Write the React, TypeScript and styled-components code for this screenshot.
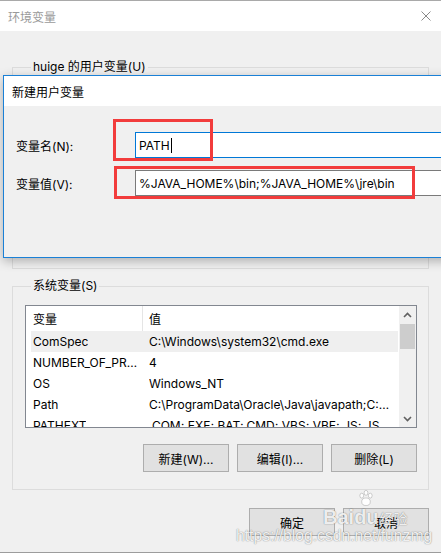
import React from "react";
import styled, { createGlobalStyle } from "styled-components";

const Global = createGlobalStyle`
  html, body { margin: 0; padding: 0; background: #ffffff; }
  body {
    font-family: "Inter", "Noto Sans CJK SC", sans-serif;
    font-size: 12px;
    color: #000;
  }
  * { box-sizing: border-box; }
`;

const Screen = styled.div`
  position: relative;
  width: 441px;
  height: 554px;
  overflow: hidden;
  display: flex;
  flex-direction: column;
  background: #ffffff;
  padding-bottom: 1px;
`;

const WindowEdge = styled.div`
  height: 1px;
  background: #a9a9a9;
  flex: none;
`;

const TitleBar = styled.div<{ $active?: boolean }>`
  height: 30px;
  flex: none;
  background: #ffffff;
  display: flex;
  align-items: center;
  justify-content: space-between;
  padding: 0 10px 0 8px;
  color: ${(p) => (p.$active ? "#000000" : "#9a9a9a")};
  font-family: "Noto Sans CJK SC", sans-serif;
  font-size: 12px;
`;

const WindowBody = styled.div`
  flex: 1;
  background: #f0f0f0;
  border-bottom: 1px solid #9c9c9c;
  padding: 28px 12px 0 12px;
  display: flex;
  flex-direction: column;
`;

const Group = styled.fieldset<{ $height?: number; $gap?: number }>`
  margin: ${(p) => p.$gap ?? 0}px 0 0 0;
  padding: 11px 11px 17px 12px;
  min-width: 0;
  border: 1px solid #dcdcdc;
  ${(p) => (p.$height ? `height: ${p.$height}px;` : "")}
`;

const Legend = styled.legend`
  margin-left: 6px;
  padding: 0 2px;
  line-height: 16px;
  font-size: 12px;
  color: #000;
`;

const List = styled.div`
  height: 123px;
  border: 1px solid #828790;
  background: #ffffff;
  display: flex;
`;

const ListMain = styled.div`
  flex: 1;
  min-width: 0;
  padding: 0 1px 0 5px;
  overflow: hidden;
`;

const HeaderRow = styled.div`
  height: 25px;
  display: flex;
  align-items: center;
`;

const Row = styled.div<{ $selected?: boolean }>`
  height: 21px;
  display: flex;
  align-items: center;
  background: ${(p) => (p.$selected ? "#efefef" : "transparent")};
`;

const NameCell = styled.div<{ $header?: boolean }>`
  width: 112px;
  height: 100%;
  flex: none;
  padding-left: 2px;
  padding-right: 4px;
  display: flex;
  align-items: center;
  white-space: nowrap;
  overflow: hidden;
  border-right: 1px solid ${(p) => (p.$header ? "#e5e5e5" : "transparent")};
`;

const CellText = styled.span`
  overflow: hidden;
  text-overflow: ellipsis;
  white-space: nowrap;
  display: block;
  min-width: 0;
`;

const ValueCell = styled.div`
  flex: 1;
  min-width: 0;
  padding-left: 6px;
  padding-right: 6px;
`;

const ScrollBar = styled.div`
  width: 17px;
  flex: none;
  background: #f0f0f0;
  display: flex;
  flex-direction: column;
  align-items: center;
`;

const ScrollArrow = styled.div`
  width: 17px;
  height: 17px;
  display: flex;
  align-items: center;
  justify-content: center;
  flex: none;
`;

const Thumb = styled.div`
  width: 15px;
  height: 25px;
  margin-top: 1px;
  background: #cdcdcd;
  flex: none;
`;

const Spacer = styled.div`
  flex: 1;
`;

const ButtonRow = styled.div<{ $top: number }>`
  display: flex;
  justify-content: flex-end;
  gap: 8px;
  margin-top: ${(p) => p.$top}px;
`;

const Button = styled.div`
  width: 86px;
  height: 28px;
  background: #e1e1e1;
  border: 1px solid #adadad;
  display: flex;
  align-items: center;
  justify-content: center;
  font-size: 12px;
  color: #000;
`;

const ChildDialog = styled.div`
  position: absolute;
  left: 3px;
  top: 75px;
  width: 470px;
  height: 183px;
  border: 1px solid #1a80d6;
  background: #f0f0f0;
  box-shadow: 0 3px 10px rgba(0, 0, 0, 0.28);
  display: flex;
  flex-direction: column;
`;

const DialogBody = styled.div`
  flex: 1;
  padding: 26px 12px 0 12px;
  display: flex;
  flex-direction: column;
  gap: 12px;
`;

const FieldRow = styled.div`
  display: flex;
  align-items: center;
`;

const FieldLabel = styled.div`
  width: 119px;
  flex: none;
  font-size: 12px;
`;

const TextBox = styled.div<{ $focused?: boolean }>`
  flex: 1;
  height: 26px;
  background: #ffffff;
  border: 1px solid ${(p) => (p.$focused ? "#0078d7" : "#7a7a7a")};
  padding-left: 3px;
  display: flex;
  align-items: center;
  white-space: nowrap;
  font-size: 12px;
`;

const Caret = styled.span`
  display: inline-block;
  width: 1px;
  height: 15px;
  background: #000;
  margin-left: 1px;
`;

const Annotation = styled.div<{ $l: number; $t: number; $w: number; $h: number }>`
  position: absolute;
  left: ${(p) => p.$l}px;
  top: ${(p) => p.$t}px;
  width: ${(p) => p.$w}px;
  height: ${(p) => p.$h}px;
  border: 3px solid #f23c3c;
  pointer-events: none;
`;

const Watermark = styled.div`
  position: absolute;
  left: 236px;
  top: 494px;
  width: 205px;
  pointer-events: none;
  color: rgba(255, 255, 255, 0.9);
  text-shadow: 0 0 1px rgba(0, 0, 0, 0.45), 0 0 2px rgba(0, 0, 0, 0.15);
  display: flex;
  flex-direction: column;
  align-items: flex-start;
`;

const BaiduLine = styled.div`
  display: flex;
  align-items: flex-end;
  margin-left: 87px;
  height: 34px;
  font-family: "Liberation Sans", sans-serif;
  font-weight: bold;
  font-size: 20px;
  line-height: 22px;
`;

const PawStack = styled.span`
  display: inline-flex;
  flex-direction: column;
  align-items: center;
`;

const BaiduSmall = styled.span`
  font-family: "Noto Sans CJK SC", sans-serif;
  font-size: 14px;
  font-weight: normal;
  line-height: 20px;
  margin-left: 1px;
`;

const UrlLine = styled.div`
  font-family: "Liberation Sans", sans-serif;
  font-size: 15.7px;
  line-height: 18px;
  margin-top: -1px;
`;

const Chevron = ({ up }: { up?: boolean }) => (
  <svg width="9" height="6" viewBox="0 0 9 6">
    <path
      d={up ? "M1 5 L4.5 1.5 L8 5" : "M1 1 L4.5 4.5 L8 1"}
      fill="none"
      stroke="#606060"
      strokeWidth="1.6"
    />
  </svg>
);

const CloseIcon = () => (
  <svg width="10" height="10" viewBox="0 0 10 10">
    <path d="M0.5 0.5 L9.5 9.5 M9.5 0.5 L0.5 9.5" stroke="#8a8a8a" strokeWidth="1" />
  </svg>
);

const Paw = () => (
  <svg width="18" height="16" viewBox="0 0 18 17">
    <g fill="rgba(255,255,255,0.9)" stroke="rgba(0,0,0,0.3)" strokeWidth="0.6">
      <ellipse cx="4.5" cy="6" rx="2" ry="2.6" />
      <ellipse cx="9" cy="3" rx="2" ry="2.6" />
      <ellipse cx="13.5" cy="6" rx="2" ry="2.6" />
      <ellipse cx="9" cy="12.5" rx="4.5" ry="4" />
    </g>
  </svg>
);

const rows: { name: string; value: string; selected?: boolean }[] = [
  { name: "ComSpec", value: "C:\\Windows\\system32\\cmd.exe", selected: true },
  { name: "NUMBER_OF_PROCESSORS", value: "4" },
  { name: "OS", value: "Windows_NT" },
  { name: "Path", value: "C:\\ProgramData\\Oracle\\Java\\javapath;C:\\Windows\\system32" },
  { name: "PATHEXT", value: ".COM;.EXE;.BAT;.CMD;.VBS;.VBE;.JS;.JSE;.WSF;.WSH;.MSC" },
];

export default function App() {
  return (
    <>
      <Global />
      <Screen>
        <WindowEdge />
        <TitleBar>
          <span>环境变量</span>
          <CloseIcon />
        </TitleBar>
        <WindowBody>
          <Group $height={210}>
            <Legend>huige 的用户变量(U)</Legend>
          </Group>
          <Group $gap={9}>
            <Legend>系统变量(S)</Legend>
            <List>
              <ListMain>
                <HeaderRow>
                  <NameCell $header>变量</NameCell>
                  <ValueCell>值</ValueCell>
                </HeaderRow>
                {rows.map((r) => (
                  <Row key={r.name} $selected={r.selected}>
                    <NameCell>
                      <CellText>{r.name}</CellText>
                    </NameCell>
                    <ValueCell>
                      <CellText>{r.value}</CellText>
                    </ValueCell>
                  </Row>
                ))}
              </ListMain>
              <ScrollBar>
                <ScrollArrow>
                  <Chevron up />
                </ScrollArrow>
                <Thumb />
                <Spacer />
                <ScrollArrow>
                  <Chevron />
                </ScrollArrow>
              </ScrollBar>
            </List>
            <ButtonRow $top={16}>
              <Button>新建(W)...</Button>
              <Button>编辑(I)...</Button>
              <Button>删除(L)</Button>
            </ButtonRow>
          </Group>
          <ButtonRow $top={18}>
            <Button>确定</Button>
            <Button>取消</Button>
          </ButtonRow>
        </WindowBody>

        <ChildDialog>
          <TitleBar $active>
            <span>新建用户变量</span>
          </TitleBar>
          <DialogBody>
            <FieldRow>
              <FieldLabel>变量名(N):</FieldLabel>
              <TextBox $focused>
                PATH
                <Caret />
              </TextBox>
            </FieldRow>
            <FieldRow>
              <FieldLabel>变量值(V):</FieldLabel>
              <TextBox>%JAVA_HOME%\bin;%JAVA_HOME%\jre\bin</TextBox>
            </FieldRow>
          </DialogBody>
        </ChildDialog>

        <Annotation $l={113} $t={119} $w={100} $h={42} />
        <Annotation $l={114} $t={166} $w={301} $h={33} />

        <Watermark>
          <BaiduLine>
            Bai
            <PawStack>
              <Paw />
              <span>du</span>
            </PawStack>
            <BaiduSmall>经验</BaiduSmall>
          </BaiduLine>
          <UrlLine>https://blog.csdn.net/funzmg</UrlLine>
        </Watermark>
      </Screen>
    </>
  );
}
